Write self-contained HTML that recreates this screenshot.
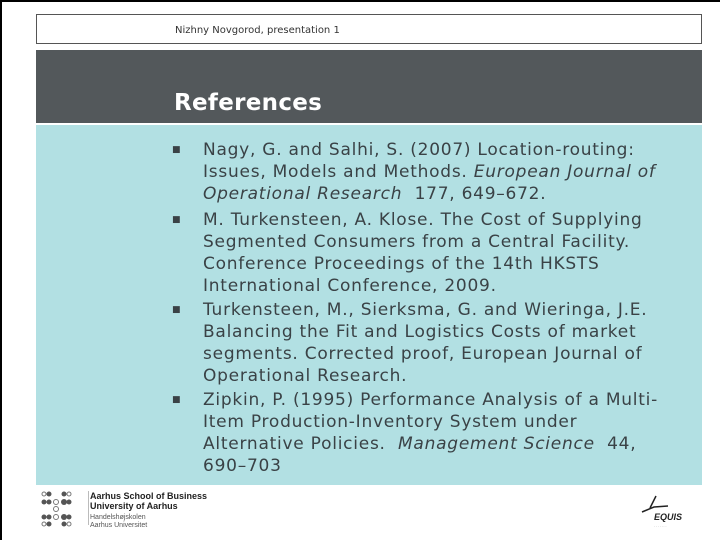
<!DOCTYPE html>
<html><head><meta charset="utf-8"><style>
body{margin:0;width:720px;height:540px;background:#fff;position:relative;overflow:hidden;font-family:"DejaVu Sans","Liberation Sans",sans-serif;}
.edge-t{position:absolute;left:0;top:0;width:720px;height:2px;background:#000}
.edge-l{position:absolute;left:0;top:0;width:2px;height:540px;background:#000}
.hdr{position:absolute;left:36px;top:14px;width:664px;height:28px;border:1px solid #555;}
.hdr span{position:absolute;left:138px;top:10px;font-size:10px;color:#333}
.band{position:absolute;left:36px;top:50px;width:666px;height:73px;background:#53585b}
.band h1{position:absolute;left:138px;top:40px;margin:0;font-size:23px;font-weight:bold;color:#fff;letter-spacing:0.3px}
.blue{position:absolute;left:36px;top:125px;width:666px;height:360px;background:#b2e0e3}
.it{position:absolute;left:203px;font-size:17px;line-height:22px;color:#3a4246;white-space:nowrap;letter-spacing:0.75px}
.b{position:absolute;left:172px;font-size:9px;color:#3a4246}
i{font-style:italic}
.logo{position:absolute;left:90px;top:491px;font-family:"Liberation Sans",sans-serif;color:#222}
</style></head><body>
<div class="edge-t"></div><div class="edge-l"></div>
<div class="hdr"><span>Nizhny Novgorod, presentation 1</span></div>
<div class="band"><h1>References</h1></div>
<div class="blue"></div>
<div class="b" style="top:145px">■</div>
<div class="b" style="top:215px">■</div>
<div class="b" style="top:305px">■</div>
<div class="b" style="top:395px">■</div>
<div class="it" style="top:139px">Nagy, G. and Salhi, S. (2007) Location-routing:<br>Issues, Models and Methods. <i>European Journal of</i><br><i>Operational Research</i>&nbsp; 177, 649–672.</div>
<div class="it" style="top:209px">M. Turkensteen, A. Klose. The Cost of Supplying<br>Segmented Consumers from a Central Facility.<br>Conference Proceedings of the 14th HKSTS<br>International Conference, 2009.</div>
<div class="it" style="top:299px">Turkensteen, M., Sierksma, G. and Wieringa, J.E.<br>Balancing the Fit and Logistics Costs of market<br>segments. Corrected proof, European Journal of<br>Operational Research.</div>
<div class="it" style="top:389px">Zipkin, P. (1995) Performance Analysis of a Multi-<br>Item Production-Inventory System under<br>Alternative Policies.&nbsp; <i>Management Science</i>&nbsp; 44,<br>690–703</div>
<svg style="position:absolute;left:40px;top:490px" width="50" height="40" viewBox="0 0 50 40">
<g fill="#555"><circle cx="9" cy="4" r="2.5"/><circle cx="24" cy="4" r="2.5"/><circle cx="4" cy="12" r="2.5"/><circle cx="9" cy="12" r="2.5"/><circle cx="24" cy="12" r="3"/><circle cx="29" cy="12" r="2.5"/><circle cx="4" cy="27" r="2.5"/><circle cx="9" cy="27" r="2.5"/><circle cx="24" cy="27" r="3"/><circle cx="29" cy="27" r="2.5"/><circle cx="9" cy="34" r="2.5"/><circle cx="24" cy="34" r="2.5"/></g>
<g fill="none" stroke="#777"><circle cx="4" cy="4" r="2"/><circle cx="29" cy="4" r="2"/><circle cx="16" cy="12" r="2.5"/><circle cx="16" cy="19" r="2.5"/><circle cx="16" cy="27" r="2.5"/><circle cx="4" cy="34" r="2"/><circle cx="29" cy="34" r="2"/></g>
</svg>
<div style="position:absolute;left:88px;top:491px;width:1px;height:34px;background:#bbb"></div>
<div class="logo"><div style="font-size:9px;font-weight:bold;line-height:10px">Aarhus School of Business</div><div style="font-size:9px;font-weight:bold;line-height:10px">University of Aarhus</div><div style="font-size:7px;line-height:8px;margin-top:3px;color:#555">Handelshøjskolen<br>Aarhus Universitet</div></div>
<svg style="position:absolute;left:640px;top:494px" width="50" height="36"><path d="M16 2 L10 14 M2 18 L14 13 L28 12" stroke="#222" stroke-width="1.5" fill="none"/><text x="14" y="26" font-size="9" font-style="italic" font-weight="bold" font-family="Liberation Sans" fill="#222">EQUIS</text><text x="14" y="33" font-size="3" fill="#666">. . . . . . .</text></svg>
</body></html>
